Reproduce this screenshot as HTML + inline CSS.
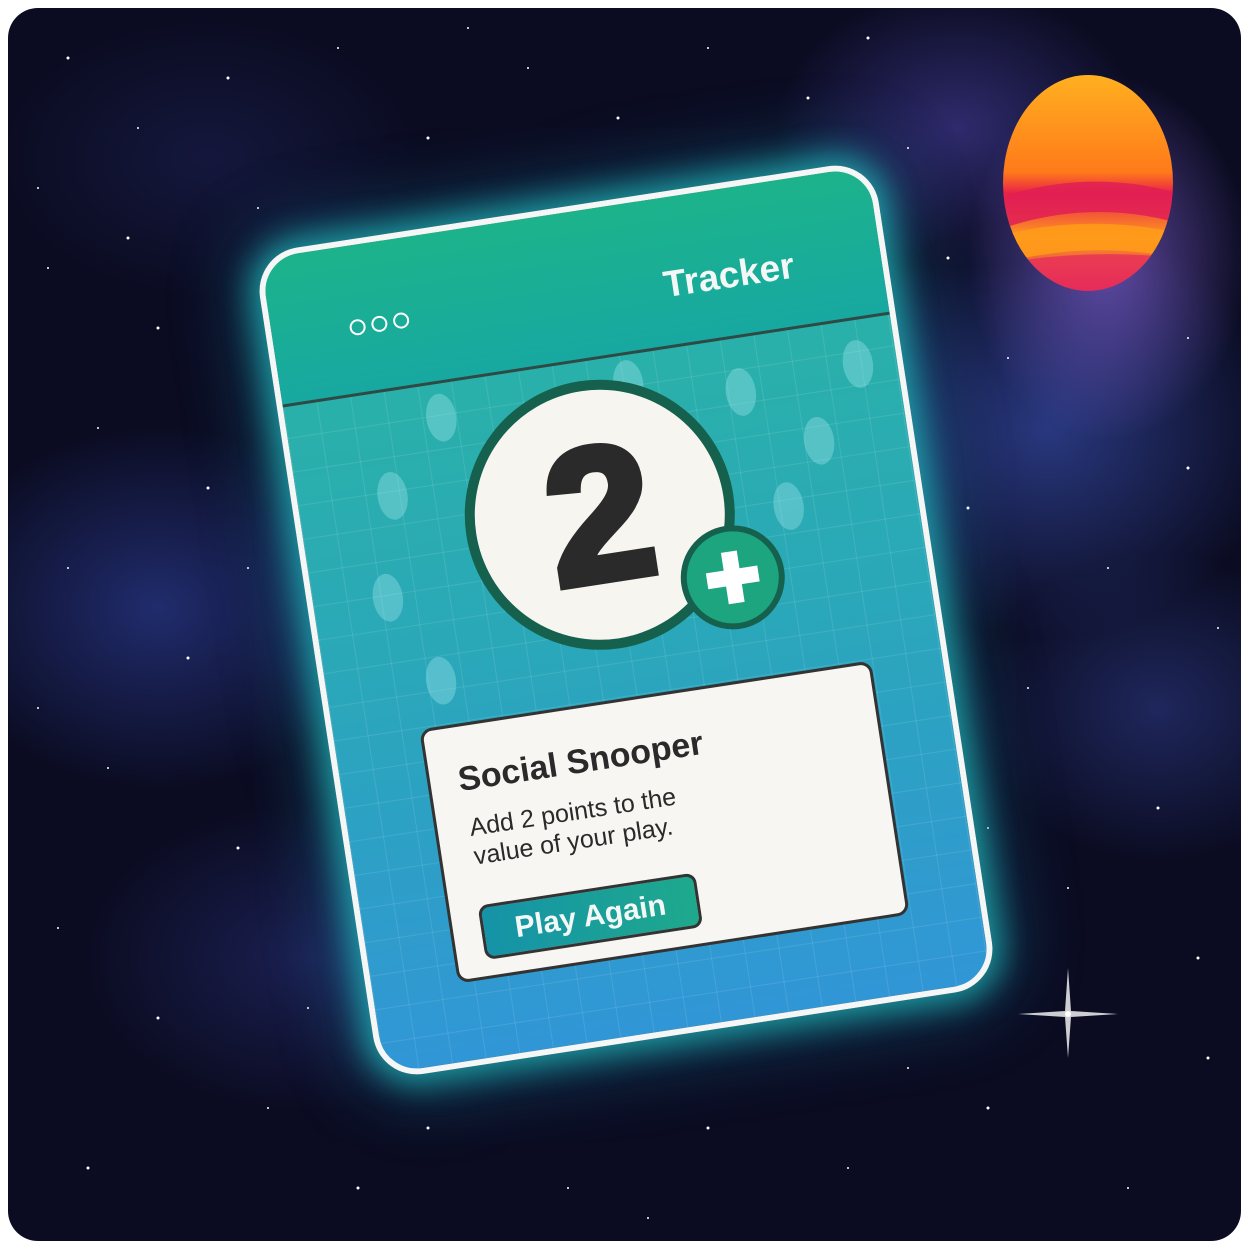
<!DOCTYPE html>
<html><head><meta charset="utf-8"><style>
html,body{margin:0;padding:0;background:#fff;width:1249px;height:1249px;overflow:hidden}
.bg{position:absolute;left:8px;top:8px;width:1233px;height:1233px;border-radius:30px;overflow:hidden;
background:
radial-gradient(ellipse 200px 260px at 1100px 250px,rgba(150,110,240,.6),transparent 70%),
radial-gradient(ellipse 330px 300px at 1040px 420px,rgba(70,100,220,.5),transparent 70%),
radial-gradient(ellipse 260px 200px at 950px 120px,rgba(90,80,200,.45),transparent 70%),
radial-gradient(ellipse 320px 260px at 150px 600px,rgba(50,70,170,.55),transparent 70%),
radial-gradient(ellipse 260px 220px at 1150px 700px,rgba(60,80,180,.4),transparent 70%),
radial-gradient(ellipse 320px 220px at 300px 950px,rgba(50,60,150,.4),transparent 70%),
radial-gradient(ellipse 300px 200px at 200px 150px,rgba(40,50,120,.3),transparent 70%),
#0b0c22}
.stars{position:absolute;inset:0}
.card{position:absolute;left:305px;top:194px;width:626px;height:836px;transform:rotate(-8.7deg);border-radius:44px;
border:6px solid #f4f7f6;box-sizing:border-box;overflow:hidden;
background:linear-gradient(#2ab5a1,#2aa8b8 50%,#3196d6);
box-shadow:0 0 30px 10px rgba(40,230,220,.55),0 0 70px 20px rgba(30,160,200,.35)}
.grid{position:absolute;left:0;top:147px;right:0;bottom:0;
background-image:linear-gradient(rgba(255,255,255,.1) 1px,transparent 1px),linear-gradient(90deg,rgba(255,255,255,.1) 1px,transparent 1px);background-size:34px 34px}
.fp{position:absolute;width:30px;height:48px;border-radius:50%;background:rgba(170,235,240,.35)}
.head{position:absolute;left:0;top:0;width:100%;height:147px;background:linear-gradient(#1cb38b,#17a8a1);border-bottom:3px solid #2d4a45}
.tracker{position:absolute;left:395px;top:66px;font:bold 37px "Liberation Sans",sans-serif;color:#f3f7f5}
.dots{position:absolute;left:78px;top:74px}
.dots span{display:inline-block;width:12px;height:12px;border:2.5px solid #fff;border-radius:50%;margin-right:6px}
.circ{position:absolute;left:162px;top:169px;width:250px;height:250px;border-radius:50%;background:#f7f5f0;border:10px solid #16614d;
text-align:center;font:bold 190px/250px "Liberation Sans",sans-serif;color:#2a2a2a;-webkit-text-stroke:8px #2a2a2a}
.plus{position:absolute;left:367px;top:334px;width:92px;height:92px;border-radius:50%;background:#1ca57f;border:6px solid #16614d}
.plus:before{content:"";position:absolute;left:38px;top:20px;width:16px;height:52px;background:#fff}
.plus:after{content:"";position:absolute;left:20px;top:38px;width:52px;height:16px;background:#fff}
.box{position:absolute;left:86px;top:489px;width:457px;height:257px;background:#f7f6f3;border:3px solid #333;border-radius:12px;box-sizing:border-box}
.t{position:absolute;left:28px;top:34px;font:bold 34px "Liberation Sans",sans-serif;color:#2a2a2a}
.d{position:absolute;left:32px;top:88px;font:25px/29px "Liberation Sans",sans-serif;color:#2a2a2a}
.btn{position:absolute;left:28px;top:180px;width:220px;height:55px;border:3px solid #333;border-radius:10px;box-sizing:border-box;
background:linear-gradient(90deg,#1593a8,#1ea98c);color:#f3f7f5;font:bold 30px/49px "Liberation Sans",sans-serif;text-align:center}
</style></head><body>
<div class="bg">
<svg class="stars" width="1233" height="1233">
<g fill="#fff">
<circle cx="60" cy="50" r="1.5"/><circle cx="130" cy="120" r="1"/><circle cx="220" cy="70" r="1.5"/><circle cx="330" cy="40" r="1"/><circle cx="420" cy="130" r="1.5"/><circle cx="520" cy="60" r="1"/><circle cx="610" cy="110" r="1.5"/><circle cx="700" cy="40" r="1"/><circle cx="800" cy="90" r="1.5"/><circle cx="900" cy="140" r="1"/>
<circle cx="40" cy="260" r="1"/><circle cx="150" cy="320" r="1.5"/><circle cx="90" cy="420" r="1"/><circle cx="200" cy="480" r="1.5"/><circle cx="60" cy="560" r="1"/><circle cx="180" cy="650" r="1.5"/><circle cx="100" cy="760" r="1"/><circle cx="230" cy="840" r="1.5"/><circle cx="50" cy="920" r="1"/><circle cx="150" cy="1010" r="1.5"/><circle cx="260" cy="1100" r="1"/><circle cx="80" cy="1160" r="1.5"/>
<circle cx="420" cy="1120" r="1.5"/><circle cx="560" cy="1180" r="1"/><circle cx="700" cy="1120" r="1.5"/><circle cx="840" cy="1160" r="1"/><circle cx="980" cy="1100" r="1.5"/><circle cx="1120" cy="1180" r="1"/><circle cx="1200" cy="1050" r="1.5"/>
<circle cx="1000" cy="350" r="1"/><circle cx="960" cy="500" r="1.5"/><circle cx="1100" cy="560" r="1"/><circle cx="1180" cy="460" r="1.5"/><circle cx="1020" cy="680" r="1"/><circle cx="1150" cy="800" r="1.5"/><circle cx="1060" cy="880" r="1"/><circle cx="1190" cy="950" r="1.5"/><circle cx="980" cy="820" r="1"/>
<circle cx="30" cy="180" r="1"/><circle cx="250" cy="200" r="1"/><circle cx="120" cy="230" r="1.5"/><circle cx="30" cy="700" r="1"/><circle cx="240" cy="560" r="1"/><circle cx="300" cy="1000" r="1"/><circle cx="350" cy="1180" r="1.5"/><circle cx="640" cy="1210" r="1"/><circle cx="900" cy="1060" r="1"/><circle cx="1210" cy="620" r="1"/><circle cx="940" cy="250" r="1.5"/><circle cx="1180" cy="330" r="1"/><circle cx="860" cy="30" r="1.5"/><circle cx="460" cy="20" r="1"/>
<circle cx="1060" cy="1006" r="3"/>
</g>
<path d="M1060 960L1063 1003L1110 1006L1063 1009L1060 1050L1057 1009L1010 1006L1057 1003Z" fill="#fff" opacity=".8"/>
<defs><linearGradient id="eg" x1="0" y1="0" x2="0" y2="1"><stop offset="0" stop-color="#ffb020"/><stop offset=".45" stop-color="#ff7a1a"/><stop offset=".55" stop-color="#e8204a"/><stop offset=".75" stop-color="#ff9a20"/><stop offset="1" stop-color="#d81b5a"/></linearGradient>
<clipPath id="ec"><ellipse cx="1080" cy="175" rx="85" ry="108"/></clipPath></defs>
<ellipse cx="1080" cy="175" rx="85" ry="108" fill="url(#eg)"/>
<g clip-path="url(#ec)">
<path d="M990 190Q1080 160 1170 185L1170 215Q1080 190 990 222Z" fill="#e01e55" opacity=".85"/>
<path d="M990 228Q1080 205 1170 225L1170 250Q1080 232 990 256Z" fill="#ff9a1a" opacity=".9"/>
<path d="M990 256Q1080 240 1170 250L1170 290L990 290Z" fill="#e8305a" opacity=".8"/>
</g>
</svg>
<div class="card">
<div class="grid"></div>
<div class="fp" style="left:80px;top:230px"></div><div class="fp" style="left:60px;top:330px"></div><div class="fp" style="left:100px;top:420px"></div>
<div class="fp" style="left:440px;top:180px"></div><div class="fp" style="left:510px;top:240px"></div><div class="fp" style="left:470px;top:300px"></div><div class="fp" style="left:560px;top:170px"></div>
<div class="fp" style="left:140px;top:160px"></div><div class="fp" style="left:330px;top:155px"></div>
<div class="head"><div class="dots"><span></span><span></span><span></span></div><div class="tracker">Tracker</div></div>
<div class="circ">2</div>
<div class="plus"></div>
<div class="box"><div class="t">Social Snooper</div><div class="d">Add 2 points to the<br>value of your play.</div><div class="btn">Play Again</div></div>
</div>
</div>
</body></html>
